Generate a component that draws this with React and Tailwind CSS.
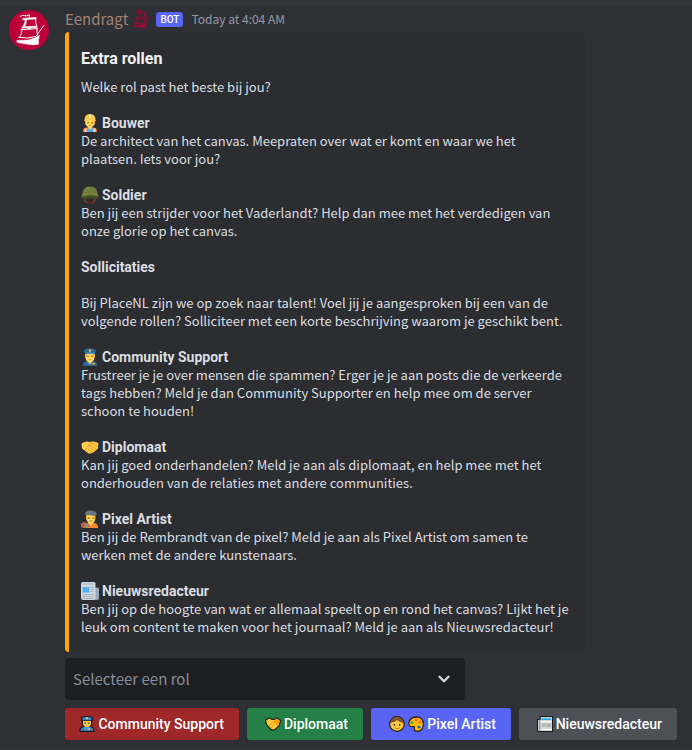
import { ChevronDown } from "lucide-react";

function ShipPaths({ color, line = 3 }) {
  return (
    <g fill={color} stroke={color} strokeLinejoin="round" strokeLinecap="round">
      <path d="M61 49 Q68 44 74 47 T88 44 L88 54" fill="none" strokeWidth={line} />
      <path d="M69 55 L109 52 L108 57 L80 59 Q80 72 74 80 L108 78 L112 83 L64 85 Q75 72 75 60 L68 60z" strokeWidth="1" />
      <path d="M107 56 Q105 68 111 81" fill="none" strokeWidth={line} />
      <path d="M84 80 h8 v7 h-8z" strokeWidth="1" />
      <path d="M63 89 L112 86" fill="none" strokeWidth={line} />
      <path d="M66 90 Q66 103 58 112 M111 87 Q109 98 114 108" fill="none" strokeWidth={line} />
      <path d="M57 112 Q84 118 108 109 L131 77" fill="none" strokeWidth={line} />
      <path d="M51 121 Q70 121 88 119 Q106 114 119 106 Q114 120 116 133 Q102 137 84 133 Q66 132 51 127z" strokeWidth="1" />
    </g>
  );
}

function Avatar() {
  return (
    <svg viewBox="27 30 120 120" className="size-10 shrink-0" role="img" aria-label="Eendragt">
      <circle cx="87" cy="90" r="60" fill="#be0039" />
      <ShipPaths color="#fff" />
    </svg>
  );
}

function Emoji({ children, outlined }) {
  return (
    <svg
      viewBox="0 0 36 36"
      aria-hidden="true"
      className={outlined ? "size-4 shrink-0" : "size-[18px] shrink-0"}
    >
      {children}
    </svg>
  );
}

function Builder() {
  return (
    <Emoji>
      <path d="M8 12 h20 v6 q0 4 -3 5 h-14 q-3 -1 -3 -5z" fill="#ffac33" />
      <path d="M4 36 v-3 q1 -6 8 -6 h12 q7 0 8 6 v3z" fill="#fa743e" />
      <path d="M7 29 h4 v7 h-4z M25 29 h4 v7 h-4z" fill="#ffe8b6" />
      <path d="M12 27 h12 v9 h-12z" fill="#55acee" />
      <path d="M14 23 h8 v5 l-4 4 -4 -4z" fill="#f9ca55" />
      <path d="M10 11 h16 v8 q-1 8 -8 8 t-8 -8z" fill="#ffdc5d" />
      <path d="M14 16 v3 M22 16 v3" stroke="#662113" strokeWidth="2" />
      <path d="M14 22 q4 3 8 0z" fill="#c1694f" />
      <path d="M7 12 Q7 0 18 0 T29 12 l1 2 H6z" fill="#ffcc4d" />
      <path d="M16 1 h4 v8 h-4z" fill="#ffe8b6" />
    </Emoji>
  );
}

function Helmet() {
  return (
    <Emoji>
      <path d="M6 20 Q6 34 17 34 Q30 34 30 20" fill="none" stroke="#7c3a2a" strokeWidth="3" />
      <path d="M12 32 h12 v3 h-12z" fill="#662113" />
      <path d="M5 20 h26 l-2 7 Q18 23 8 27z" fill="#3e4d1c" />
      <path d="M3 19 Q2 1 18 1 T33 19z" fill="#6f7b38" />
      <path d="M8 13 Q10 4 19 4" fill="none" stroke="#8c9850" strokeWidth="2" />
      <path d="M1 18 Q18 12 35 18 v5 Q18 17 1 24z" fill="#5c682c" />
      <path d="M2 18 Q18 12 34 18" fill="none" stroke="#89934f" strokeWidth="2" />
    </Emoji>
  );
}

function Police() {
  return (
    <Emoji>
      <path d="M4 36 v-3 q1 -7 9 -7 h10 q8 0 9 7 v3z" fill="#2a6797" />
      <path d="M14 23 h8 v5 l-4 5 -4 -5z" fill="#f9ca55" />
      <path d="M11 28 l7 6 7 -6" fill="none" stroke="#4289c1" strokeWidth="2" />
      <path d="M9 9 h18 v10 q-1 9 -9 9 t-9 -9z" fill="#ffdc5d" />
      <path d="M8 11 h3 v8 h-3z M25 11 h3 v8 h-3z" fill="#ffac33" />
      <path d="M14 15 v3 M22 15 v3" stroke="#662113" strokeWidth="2" />
      <path d="M14 22 q4 2 8 0z" fill="#c1694f" />
      <path d="M5 5 Q18 -4 31 5 l-4 7 Q18 8 9 12z" fill="#2a6797" />
      <path d="M9 10 Q18 6 27 10 v3 Q18 10 9 13z" fill="#4289c1" />
      <circle cx="18" cy="5" r="2.5" fill="#ffac33" />
      <path d="M23 30 h5 v3 h-5z" fill="#ffac33" />
    </Emoji>
  );
}

function Handshake() {
  return (
    <Emoji>
      <path d="M1 11 Q10 5 17 8 Q26 5 35 10 L34 21 Q27 28 20 31 Q15 32 11 28 L2 21z" fill="#ffcc4d" />
      <path d="M14 15 Q18 9 24 11 L34 18 M8 24 l4 -4 M12 28 l4 -5 M16 31 l4 -5 M23 29 l-5 -5 M27 26 l-6 -5 M14 15 q3 3 7 0 l9 8" fill="none" stroke="#e28f20" strokeWidth="1.6" />
    </Emoji>
  );
}

function Artist() {
  return (
    <Emoji>
      <path d="M4 36 v-3 q1 -7 9 -7 h12 q8 0 9 7 v3z" fill="#ff8534" />
      <path d="M15 23 h8 v5 l-4 4 -4 -4z" fill="#f9ca55" />
      <path d="M11 9 h17 v10 q-1 8 -8 8 t-9 -8z" fill="#ffdc5d" />
      <path d="M10 11 h3 v7 h-3z M26 11 h3 v7 h-3z" fill="#ffac33" />
      <path d="M16 15 v3 M24 15 v3" stroke="#662113" strokeWidth="2" />
      <path d="M16 21 h8 q-4 5 -8 0" fill="#c1694f" />
      <path d="M8 9 Q8 1 19 1 T32 9 q-3 3 -11 2 T8 9z" fill="#66757f" />
      <path d="M0 27 q8 -5 15 1 q5 4 1 7 Q6 37 0 34z" fill="#c1694f" />
      <circle cx="4" cy="30" r="2" fill="#dd2e44" />
      <circle cx="10" cy="30" r="2" fill="#55acee" />
      <circle cx="12" cy="34" r="1.8" fill="#77b255" />
    </Emoji>
  );
}

function Newspaper() {
  return (
    <Emoji>
      <path d="M28 11 h6 q2 0 2 2 v20 q0 3 -4 3 t-4 -3z" fill="#99aab5" />
      <path d="M3 0 h23 q3 0 3 3 v33 H4 q-4 0 -4 -4 V3 q0 -3 3 -3z" fill="#ccd6dd" />
      <path d="M3 4 h22 M17 11 h8 M17 15 h8 M17 19 h8 M3 25 h22 M3 29 h22 M3 33 h22" stroke="#a9b8c2" strokeWidth="2.4" />
      <path d="M3 10 h13 v11 h-13z" fill="#55acee" />
    </Emoji>
  );
}

function ButtonPolice() {
  return (
    <Emoji outlined>
      <path d="M4 3 Q18 -3 32 3 L30 12 v7 l-3 4 q8 2 8 8 v5 H1 v-5 q0 -6 8 -8 l-3 -4 v-7z" fill="#141a22" />
      <path d="M4 33 v-2 q1 -5 9 -6 h10 q8 1 9 6 v2z" fill="#4a98d0" />
      <path d="M9 11 h18 v7 q-1 7 -9 7 t-9 -7z" fill="#fcc44c" />
      <path d="M7 4 Q18 0 29 4 l-2 6 H9z" fill="#3f8fcb" />
      <path d="M9 10 h18" stroke="#1b3551" strokeWidth="2" />
      <path d="M14 14 v4 M22 14 v4 M10 29 v4 M26 29 v4" stroke="#43311c" strokeWidth="2" />
      <path d="M16 3 h4 v4 h-4z M21 28 h4 v3 h-4z" fill="#ffd54a" />
    </Emoji>
  );
}

function ButtonHandshake() {
  return (
    <Emoji outlined>
      <path d="M1 10 L9 4 L16 8 H21 L27 4 L35 10 L32 21 L23 30 L17 32 L11 28 L4 20z" fill="#ffc83d" stroke="#241c10" strokeWidth="2.5" strokeLinejoin="round" />
      <path d="M21 11 L27 7 L32 11 L29 19 L26 20 L20 15 L15 16 L15 13z" fill="#f5a300" />
      <path d="M9 22 l4 -3 M13 27 l4 -4" stroke="#d78b00" strokeWidth="2" />
    </Emoji>
  );
}

function ButtonFace() {
  return (
    <Emoji outlined>
      <circle cx="18" cy="18" r="16.5" fill="#ffc83d" stroke="#1c1612" strokeWidth="2.5" />
      <path d="M3 18 Q3 3 18 3 T33 18 L28 14 Q22 13 18 9 Q13 15 6 14z" fill="#845032" />
      <path d="M12 18 v4 M24 18 v4" stroke="#402a32" strokeWidth="3" />
      <path d="M13 27 q5 3 10 0" fill="none" stroke="#b97008" strokeWidth="2" />
    </Emoji>
  );
}

function ButtonPalette() {
  return (
    <Emoji outlined>
      <path d="M20 2 Q34 3 34.5 18 Q34 34 21 34.5 Q13 34 14 28 Q16 24 12 24 Q2 25 1.5 17 Q4 2 20 2z" fill="#ffb900" stroke="#1c1612" strokeWidth="2.5" />
      <circle cx="9" cy="15" r="2.8" fill="#16a13d" />
      <circle cx="18" cy="9" r="2.8" fill="#e74856" />
      <circle cx="27" cy="14" r="2.8" fill="#f7630c" />
      <circle cx="25" cy="25" r="3.2" fill="#0063d1" />
    </Emoji>
  );
}

function ButtonNewspaper() {
  return (
    <Emoji outlined>
      <path d="M7 1 H35 V35 H3 Q1 35 1 31 V8 H7z" fill="#d3d3d3" stroke="#17191c" strokeWidth="2.5" />
      <path d="M6 8 v25" stroke="#85888c" strokeWidth="2" />
      <path d="M10 7 h22" stroke="#28afea" strokeWidth="4" />
      <path d="M9 13 h24 M9 30 h24" stroke="#f8f8f8" strokeWidth="3" />
      <path d="M11 18 h8 M11 22 h8" stroke="#9b9b9b" strokeWidth="2" />
      <path d="M22 17 h9 v8 h-9z" fill="#b4b4b4" />
    </Emoji>
  );
}

const sections = [
  {
    Icon: Builder,
    title: "Bouwer",
    lines: ["De architect van het canvas. Meepraten over wat er komt en waar we het", "plaatsen. Iets voor jou?"],
  },
  {
    Icon: Helmet,
    title: "Soldier",
    lines: ["Ben jij een strijder voor het Vaderlandt? Help dan mee met het verdedigen van", "onze glorie op het canvas."],
  },
];

const vacancies = [
  {
    Icon: Police,
    title: "Community Support",
    lines: [
      "Frustreer je je over mensen die spammen? Erger je je aan posts die de verkeerde",
      "tags hebben? Meld je dan Community Supporter en help mee om de server",
      "schoon te houden!",
    ],
  },
  {
    Icon: Handshake,
    title: "Diplomaat",
    lines: ["Kan jij goed onderhandelen? Meld je aan als diplomaat, en help mee met het", "onderhouden van de relaties met andere communities."],
  },
  {
    Icon: Artist,
    title: "Pixel Artist",
    lines: ["Ben jij de Rembrandt van de pixel? Meld je aan als Pixel Artist om samen te", "werken met de andere kunstenaars."],
  },
  {
    Icon: Newspaper,
    title: "Nieuwsredacteur",
    lines: ["Ben jij op de hoogte van wat er allemaal speelt op en rond het canvas? Lijkt het je", "leuk om content te maken voor het journaal? Meld je aan als Nieuwsredacteur!"],
  },
];

const headingText = "font-[Roboto,sans-serif] text-sm leading-[18px] font-bold";

function Lines({ lines }) {
  return (
    <p className="text-[13px] leading-[18px]">
      {lines.map((line) => (
        <span key={line} className="block">{line}</span>
      ))}
    </p>
  );
}

function Role({ Icon, title, lines }) {
  return (
    <section>
      <h3 className={`flex gap-[3px] ${headingText}`}>
        <Icon />
        {title}
      </h3>
      <Lines lines={lines} />
    </section>
  );
}

const buttonBase = "flex h-8 items-center justify-end gap-[3px] rounded-[3px] pr-[15px] font-[Roboto,sans-serif] text-sm font-medium text-white";

export default function App() {
  return (
    <main className="min-h-screen bg-[#313338] pt-1.5 font-['Noto_Sans_CJK_JP','Noto_Sans',sans-serif]">
      <article className="flex gap-4 bg-[#2e3035] pt-1 pr-3 pb-2 pl-[9px]">
        <Avatar />
        <div className="min-w-0 flex-1">
          <header className="flex h-[22px] items-center pb-1">
            <span className="text-[15px] leading-[18px] text-[#a08477]">Eendragt</span>
            <svg viewBox="43 42 92 94" aria-hidden="true" className="ml-1 size-[18px]">
              <ShipPaths color="#9a0a34" line={6} />
            </svg>
            <span className="ml-1.5 flex h-[15px] items-center rounded-[3px] bg-[#5865f2] px-1 font-[Roboto,sans-serif] text-[10px] font-medium text-white">BOT</span>
            <time className="ml-2 text-xs leading-[18px] text-[#949ba4]">Today at 4:04 AM</time>
          </header>
          <div className="max-w-[520px] rounded border-l-4 border-[#ffa800] bg-[#2b2d31] py-4 pr-2 pl-3 text-[#dbdee1]">
            <h2 className="font-[Roboto,sans-serif] text-base leading-[22px] font-bold text-[#f2f3f5]">Extra rollen</h2>
            <div className="mt-2 flex flex-col gap-[18px]">
              <Lines lines={["Welke rol past het beste bij jou?"]} />
              {sections.map((s) => (
                <Role key={s.title} {...s} />
              ))}
              <h3 className={headingText}>Sollicitaties</h3>
              <Lines lines={["Bij PlaceNL zijn we op zoek naar talent! Voel jij je aangesproken bij een van de", "volgende rollen? Solliciteer met een korte beschrijving waarom je geschikt bent."]} />
              {vacancies.map((s) => (
                <Role key={s.title} {...s} />
              ))}
            </div>
          </div>
          <div className="mt-1.5 grid max-w-[400px] items-center">
            <select
              aria-label="Selecteer een rol"
              className="col-start-1 row-start-1 h-[42px] w-full appearance-none rounded bg-[#1e1f22] pr-10 pl-2 text-[15px] text-[#878d97]"
            >
              <option>Selecteer een rol</option>
            </select>
            <ChevronDown className="pointer-events-none col-start-1 row-start-1 mr-3 size-[18px] justify-self-end text-[#dbdee1]" strokeWidth={3} />
          </div>
          <div className="mt-2 flex flex-wrap gap-2">
            <button className={`${buttonBase} w-[174px] bg-[#a12828]`}>
              <ButtonPolice />
              Community Support
            </button>
            <button className={`${buttonBase} w-[116px] bg-[#248046]`}>
              <ButtonHandshake />
              Diplomaat
            </button>
            <button className={`${buttonBase} w-[140px] bg-[#5865f2]`}>
              <ButtonFace />
              <ButtonPalette />
              Pixel Artist
            </button>
            <button className={`${buttonBase} w-[158px] bg-[#4e5058]`}>
              <ButtonNewspaper />
              Nieuwsredacteur
            </button>
          </div>
        </div>
      </article>
    </main>
  );
}
